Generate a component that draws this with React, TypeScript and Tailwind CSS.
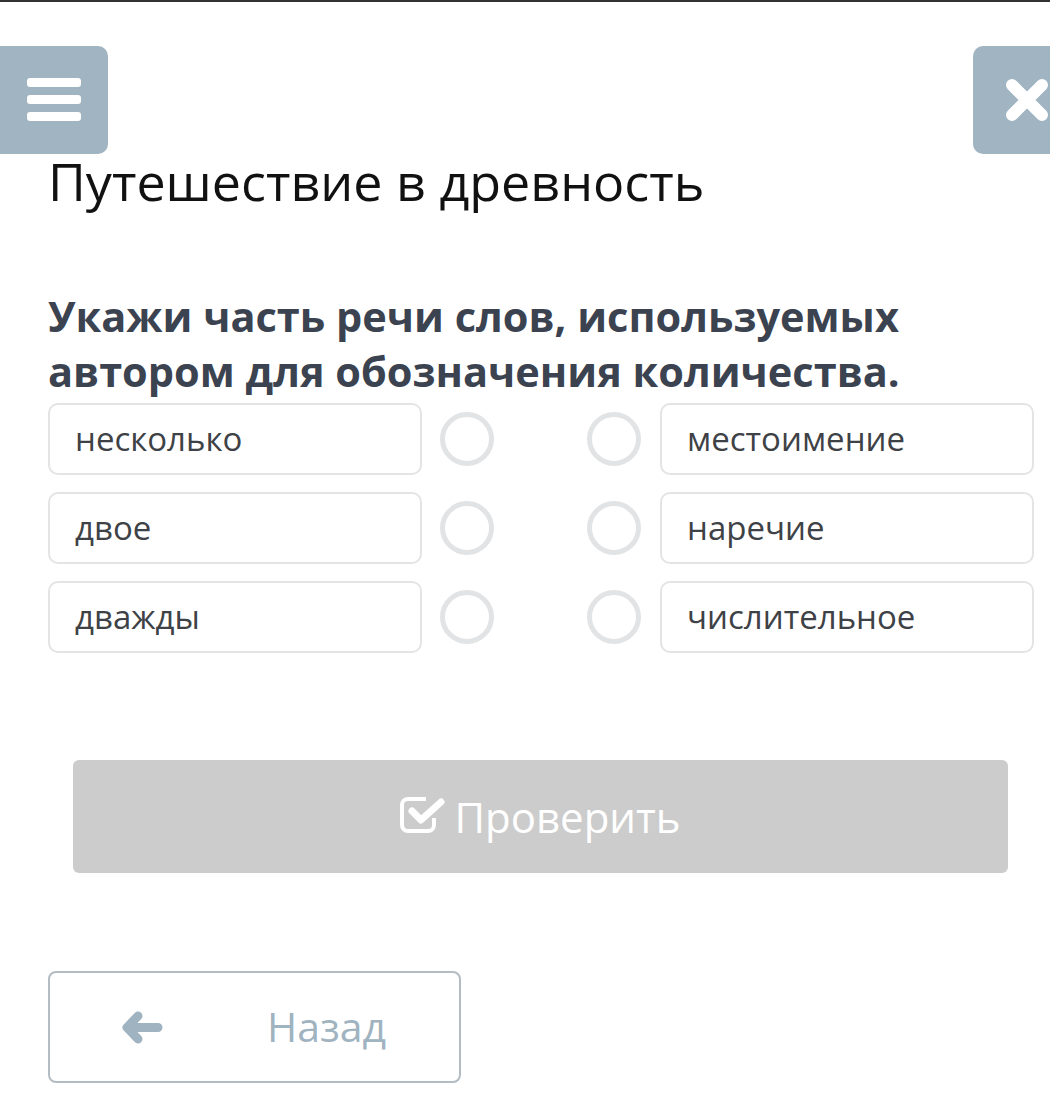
import React from "react";

const LEFT = ["несколько", "двое", "дважды"];
const RIGHT = ["местоимение", "наречие", "числительное"];

function OptionBox({ text }: { text: string }) {
  return (
    <div className="w-[374px] h-[72px] flex items-center pl-[25px] rounded-[10px] border-2 border-[#e3e4e6] bg-white text-[33px] text-[#3e4246]">
      {text}
    </div>
  );
}

function Circle() {
  return <div className="w-[54px] h-[54px] rounded-full border-[5px] border-[#e1e3e5]" />;
}

export default function App() {
  return (
    <div
      className="w-full min-h-[1116px] bg-white overflow-hidden border-t-2 border-[#333]"
      style={{ fontFamily: '"Open Sans", "Noto Sans", sans-serif' }}
    >
      <div className="flex justify-between mt-[44px]">
        <button className="w-[108px] h-[108px] rounded-r-[10px] bg-[#a0b4c1] flex items-center justify-center">
          <svg width="56" height="46" viewBox="0 0 56 46">
            <rect x="1" y="1" width="54" height="9" rx="3" fill="#fff" />
            <rect x="1" y="18" width="54" height="9" rx="3" fill="#fff" />
            <rect x="1" y="35" width="54" height="9" rx="3" fill="#fff" />
          </svg>
        </button>
        <button className="w-[108px] h-[108px] -mr-[31px] rounded-[10px] bg-[#a0b4c1] flex items-center justify-center">
          <svg width="44" height="44" viewBox="0 0 44 44">
            <path d="M7 7 L37 37 M37 7 L7 37" stroke="#fff" strokeWidth="12" strokeLinecap="round" />
          </svg>
        </button>
      </div>

      <h1 className="ml-[48px] mt-[1px] text-[52px] leading-none text-[#111]">Путешествие в древность</h1>

      <p className="ml-[48px] mt-[82px] text-[41.5px] leading-[55px] font-bold text-[#3c4350]">
        Укажи часть речи слов, используемых
        <br />
        автором для обозначения количества.
      </p>

      <div className="mt-[4px] pl-[48px] pr-[16px] flex flex-col gap-[17px]">
        {LEFT.map((l, i) => (
          <div key={l} className="flex items-center">
            <OptionBox text={l} />
            <div className="ml-[18px]">
              <Circle />
            </div>
            <div className="ml-[93px]">
              <Circle />
            </div>
            <div className="ml-[19px]">
              <OptionBox text={RIGHT[i]} />
            </div>
          </div>
        ))}
      </div>

      <button className="mt-[107px] ml-[73px] w-[935px] h-[113px] rounded-[6px] bg-[#cccccc] flex items-center justify-center gap-[8px] text-white text-[42px]">
        <svg width="46" height="36" viewBox="0 0 46 36" className="mb-[3px]">
          <path
            d="M26 2 H8 A6 6 0 0 0 2 8 V28 A6 6 0 0 0 8 34 H28 A6 6 0 0 0 34 28 V21"
            fill="none"
            stroke="#fff"
            strokeWidth="4"
          />
          <path d="M12 14 L21 23 L41 5" fill="none" stroke="#fff" strokeWidth="7" strokeLinecap="round" strokeLinejoin="round" />
        </svg>
        <span>Проверить</span>
      </button>

      <button className="mt-[98px] ml-[48px] w-[413px] h-[112px] rounded-[8px] border-2 border-[#b3bcc2] bg-white flex items-center pl-[72px] text-[41px] text-[#9fb3c0]">
        <svg width="41" height="33" viewBox="0 0 41 33">
          <path d="M16 5 L5 16.5 L16 28 M6 16.5 H36" fill="none" stroke="#9fb3c0" strokeWidth="9" strokeLinecap="round" strokeLinejoin="round" />
        </svg>
        <span className="ml-[104px]">Назад</span>
      </button>
    </div>
  );
}
